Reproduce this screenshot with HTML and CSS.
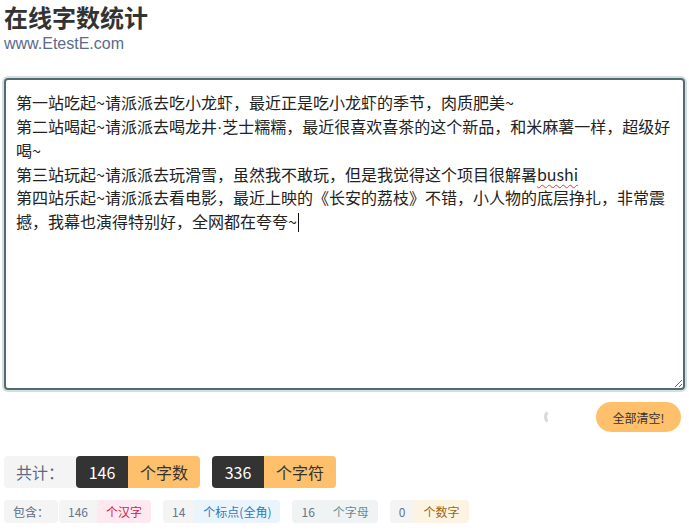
FILE: index.html
```html
<!DOCTYPE html>
<html lang="zh-CN">
<head>
<meta charset="utf-8">
<title>在线字数统计</title>
<link rel="stylesheet" href="styles.css">
</head>
<body>
<div class="page">
  <header class="head">
    <h1 class="title">在线字数统计</h1>
    <div class="site">www.EtestE.com</div>
  </header>

  <div class="editor"><div class="line">第一站吃起~请派派去吃小龙虾，最近正是吃小龙虾的季节，肉质肥美~</div><div class="line">第二站喝起~请派派去喝龙井<span class="dot">·</span>芝士糯糯，最近很喜欢喜茶的这个新品，和米麻薯一样，超级好</div><div class="line">喝~</div><div class="line">第三站玩起~请派派去玩滑雪，虽然我不敢玩，但是我觉得这个项目很解暑<span class="typo">bushi</span></div><div class="line">第四站乐起~请派派去看电影，最近上映的《长安的荔枝》不错，小人物的底层挣扎，非常震</div><div class="line">撼，我幕也演得特别好，全网都在夸夸~<span class="caret"></span></div></div>

  <div class="actions">
    <span class="spinner"></span>
    <button class="clear-btn" type="button">全部清空!</button>
  </div>

  <div class="totals">
    <span class="total-label">共计：</span>
    <span class="total-group"><span class="total-num">146</span><span class="total-unit">个字数</span></span>
    <span class="total-group"><span class="total-num">336</span><span class="total-unit">个字符</span></span>
  </div>

  <div class="details">
    <span class="detail-label">包含：</span>
    <span class="chip chip-han"><span class="chip-num">146</span><span class="chip-unit">个汉字</span></span>
    <span class="chip chip-punct"><span class="chip-num">14</span><span class="chip-unit">个标点(全角)</span></span>
    <span class="chip chip-letter"><span class="chip-num">16</span><span class="chip-unit">个字母</span></span>
    <span class="chip chip-digit"><span class="chip-num">0</span><span class="chip-unit">个数字</span></span>
  </div>
</div>
</body>
</html>
```

FILE: styles.css
```css
* { box-sizing: border-box; }

html, body {
  margin: 0;
  padding: 0;
  background: #ffffff;
}

body {
  font-family: "Noto Sans CJK SC", "Liberation Sans", sans-serif;
  color: #333333;
}

.page {
  padding: 0 4px;
}

.head {
  display: flex;
  flex-direction: column;
}

.title {
  margin: 0;
  font-size: 24px;
  line-height: 34px;
  font-weight: 700;
  color: #333333;
}

.site {
  font-family: "Liberation Sans", "Noto Sans CJK SC", sans-serif;
  font-size: 16px;
  line-height: 20px;
  color: #5a6b8c;
}

.editor {
  margin-top: 24px;
  height: 312px;
  border: 2px solid #536c71;
  border-radius: 4px;
  box-shadow: 0 0 0 2px #d6dfe0;
  padding: 11px 10px;
  font-size: 16px;
  line-height: 23.6px;
  color: #222222;
  resize: vertical;
  overflow: auto;
}

.line {
  white-space: nowrap;
}

.dot {
  font-family: "Liberation Sans", sans-serif;
}

.typo {
  text-decoration: underline wavy #e53935;
  text-decoration-thickness: 1px;
  text-underline-offset: 3px;
  text-decoration-skip-ink: none;
}

.caret {
  display: inline-block;
  width: 1px;
  height: 19px;
  background: #111111;
  vertical-align: -4px;
  margin-left: 1px;
}

.actions {
  margin-top: 12px;
  display: flex;
  justify-content: flex-end;
  align-items: center;
  gap: 36px;
  padding-right: 4px;
}

.spinner {
  width: 16px;
  height: 16px;
  border-radius: 50%;
  border: 3px solid transparent;
  border-left-color: #d9d9d9;
}

.clear-btn {
  width: 85px;
  height: 30px;
  border: none;
  border-radius: 15px;
  background: #ffc06c;
  color: #333333;
  font-family: "Noto Sans CJK SC", sans-serif;
  font-size: 12px;
  padding: 0;
  cursor: pointer;
}

.totals {
  margin-top: 24px;
  display: flex;
  align-items: stretch;
  height: 32px;
  font-size: 16px;
}

.total-label {
  display: flex;
  align-items: center;
  padding: 0 12px;
  background: #f4f4f5;
  color: #5a6a83;
  border-radius: 4px 0 0 4px;
}

.total-group {
  display: flex;
  border-radius: 4px;
  overflow: hidden;
  margin-right: 12px;
}

.total-num {
  display: flex;
  align-items: center;
  justify-content: center;
  width: 52px;
  background: #333333;
  color: #ffffff;
}

.total-unit {
  display: flex;
  align-items: center;
  padding: 0 12px;
  background: #ffc06c;
  color: #333333;
}

.details {
  margin-top: 12px;
  display: flex;
  height: 23px;
  font-size: 12px;
  gap: 12px;
}

.detail-label {
  display: flex;
  align-items: center;
  padding: 0 9px;
  background: #f4f4f5;
  color: #5c6b80;
  border-radius: 4px;
  margin-right: -11px;
}

.chip {
  display: flex;
  border-radius: 4px;
  overflow: hidden;
}

.chip-num {
  display: flex;
  align-items: center;
  padding: 0 9px;
  background: #f4f4f5;
  color: #66748c;
}

.chip-unit {
  display: flex;
  align-items: center;
  padding: 0 9px;
}

.chip-han .chip-unit { background: #fde9ef; color: #d4204e; }
.chip-punct .chip-unit { background: #eaf4fc; color: #2f79b5; }
.chip-letter .chip-num,
.chip-letter .chip-unit { background: #eff3f4; }
.chip-letter .chip-unit { color: #6b8b8f; }
.chip-digit .chip-unit { background: #fdf3e3; color: #9a6618; }
```
